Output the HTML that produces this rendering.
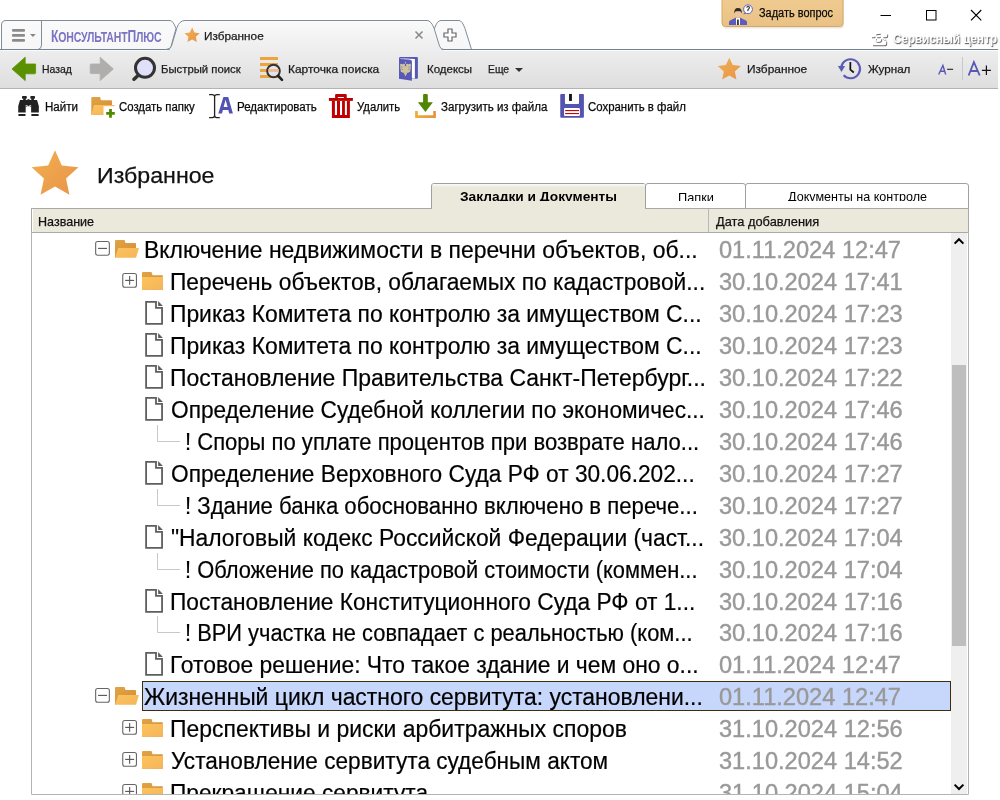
<!DOCTYPE html>
<html><head><meta charset="utf-8">
<style>
*{box-sizing:border-box}
html,body{margin:0;padding:0;width:1000px;height:800px;overflow:hidden;background:#fff;font-family:"Liberation Sans",sans-serif}
.a{position:absolute}
.t{position:absolute;white-space:nowrap;line-height:1}
.tb{position:absolute;white-space:nowrap;line-height:1;font-size:11.5px;color:#333}
.tb2{position:absolute;white-space:nowrap;line-height:1;font-size:11.5px;color:#111}
.rt{position:absolute;white-space:nowrap;font-size:23px;line-height:1;color:#000;-webkit-text-stroke:0.2px #000}
.dt{position:absolute;white-space:nowrap;font-size:23px;line-height:1;color:#999;-webkit-text-stroke:0.4px #999}

</style></head><body>

<svg class="a" style="left:0;top:0" width="1000" height="800" viewBox="0 0 1000 800">
<defs>
<linearGradient id="sg" x1="0" y1="0" x2="1" y2="1"><stop offset="0" stop-color="#f2b04e"/><stop offset="1" stop-color="#e8934a"/></linearGradient>
<linearGradient id="tbg" x1="0" y1="0" x2="0" y2="1"><stop offset="0" stop-color="#ededed"/><stop offset="1" stop-color="#dedede"/></linearGradient>
<linearGradient id="atab" gradientUnits="userSpaceOnUse" x1="0" y1="21" x2="0" y2="51"><stop offset="0" stop-color="#fafafa"/><stop offset="1" stop-color="#ededed"/></linearGradient>
<linearGradient id="itab" x1="0" y1="0" x2="0" y2="1"><stop offset="0" stop-color="#fafafa"/><stop offset="1" stop-color="#f7f7f7"/></linearGradient>
<linearGradient id="fback" x1="0" y1="0" x2="1" y2="1"><stop offset="0" stop-color="#dfa445"/><stop offset="1" stop-color="#d98a35"/></linearGradient>
<linearGradient id="ffront" x1="0" y1="0" x2="1" y2="1"><stop offset="0" stop-color="#fcc35c"/><stop offset="1" stop-color="#f5b55a"/></linearGradient>
<linearGradient id="tray" x1="0" y1="0" x2="1" y2="0"><stop offset="0" stop-color="#f0ac3a"/><stop offset="1" stop-color="#e8903e"/></linearGradient>
<linearGradient id="btn" x1="0" y1="0" x2="0" y2="1"><stop offset="0" stop-color="#f0cc90"/><stop offset="1" stop-color="#eac185"/></linearGradient>
</defs>
<rect x="722" y="-4" width="121" height="31" rx="4" fill="#cfcfcf" opacity="0.5" transform="translate(1,1.5)"/>
<rect x="722" y="-4" width="121" height="30.5" rx="3.5" fill="url(#btn)" stroke="#d9a860" stroke-width="1"/>
<g transform="translate(726,2)">
<path d="M3,22.9 L3,19.8 Q3.5,18.6 6,17.5 L9.6,15.8 L14.4,15.8 L18,17.5 Q20.6,18.6 21,19.8 L21,22.9 Z" fill="#5a5dbd"/>
<path d="M10,15.9 L14,15.9 L14,22.9 L10,22.9 Z" fill="#fff"/>
<path d="M11,17.6 L12.8,17.6 L12.9,22.9 L10.9,22.9 Z" fill="#3a3a3a"/>
<path d="M9.6,9 Q9.6,8.2 12,8.2 Q14.5,8.2 14.5,9 L14.5,13.5 Q14,15.6 12,15.8 Q10,15.6 9.6,13.5 Z" fill="#edc79c"/>
<path d="M8.3,11.6 Q7.7,6 12,6 Q16.3,6 15.8,11.6 Q15,9.3 14.2,9.2 L10,9.2 Q9,9.3 8.3,11.6 Z" fill="#2c2c2c"/>
<circle cx="22" cy="7.3" r="4.4" fill="#fff" stroke="#5d62c4" stroke-width="1"/>
<path d="M18.6,10.6 L17.2,12.4 L20.2,11.6 Z" fill="#5d62c4"/>
<path d="M20.7,5.7 Q21,4.4 22.2,4.5 Q23.7,4.7 23.3,6.1 Q22.9,7 22.1,7.4 L21.8,9.2" fill="none" stroke="#222" stroke-width="1.1"/>
</g>
<line x1="880.5" y1="15.5" x2="891" y2="15.5" stroke="#000" stroke-width="1"/>
<rect x="926.5" y="10.5" width="9.5" height="9.5" fill="none" stroke="#000" stroke-width="1"/>
<path d="M971,10 L981.3,20.3 M981.3,10 L971,20.3" stroke="#000" stroke-width="1.1"/>
<g transform="translate(868,29)"><path d="M4,8.5 H7.5 M9.2,8.5 H12.7 M14.2,8.5 H18.5 Q19.5,8.5 19.5,7.5 V5.5 M8.5,6.5 L9.3,5.3 H12.7 M8.3,10.3 V12 Q8.6,13.3 10.8,13.4 Q13.2,13.3 13.5,12 V10.3 M5,16.5 H17.5 Q18.5,16.5 18.5,15.5 V12.5 M15,9.5 L18,12" fill="none" stroke="#555" stroke-width="1.3" opacity="0.85" style="filter:blur(0.5px)"/><path d="M4,8.5 H7.5 M9.2,8.5 H12.7 M14.2,8.5 H18.5 Q19.5,8.5 19.5,7.5 V5.5 M8.5,6.5 L9.3,5.3 H12.7 M8.3,10.3 V12 Q8.6,13.3 10.8,13.4 Q13.2,13.3 13.5,12 V10.3 M5,16.5 H17.5 Q18.5,16.5 18.5,15.5 V12.5 M15,9.5 L18,12" transform="translate(-0.9,-1)" fill="none" stroke="#fff" stroke-width="1.3"/></g>
<path d="M1.5,49.5 L1.5,25 Q1.5,20.5 6,20.5 L170,20.5 Q173,20.5 176,28.5 L171,46.5 Q170,49.5 167,49.5 Z" fill="url(#itab)" stroke="#7f8d9b" stroke-width="1"/>
<path d="M41.5,21 L41.5,45 Q41.5,49 38,49.5" fill="none" stroke="#7f8d9b" stroke-width="1"/>
<path d="M427,49.5 L434.5,28.5 Q437,20.5 441,20.5 L459,20.5 Q462,20.5 465,28.5 L471.5,49.5" fill="url(#itab)" stroke="#7f8d9b" stroke-width="1"/>
<rect x="0" y="51" width="998" height="37" fill="url(#tbg)"/>
<rect x="0" y="50" width="998" height="1" fill="#fbfbfb"/>
<rect x="0" y="49" width="998" height="1" fill="#738394"/>
<rect x="0" y="88" width="998" height="1" fill="#b3b3b3"/>
<path d="M166,51 L169,50 Q171,48.5 172,45 L177,27.5 Q179.5,20.5 185,20.5 L427,20.5 Q431,20.5 434,28 L439.5,46 Q440.5,49.5 443,50 L444,51 Z" fill="url(#atab)"/>
<path d="M166,49.5 Q170.5,49.5 171.5,46 L177,27.5 Q179.5,20.5 185,20.5 L427,20.5 Q431,20.5 434,28 L439.5,46 Q440.5,49.5 444,49.5" fill="none" stroke="#7f8d9b" stroke-width="1"/>
<g fill="#8a8a8a"><rect x="12" y="29.1" width="13" height="2.7" rx="1"/><rect x="12" y="34.1" width="13" height="2.7" rx="1"/><rect x="12" y="39.1" width="13" height="2.7" rx="1"/></g>
<path d="M30,34.1 L35.8,34.1 L32.9,37 Z" fill="#858585"/>
<polygon points="192.15,27.60 194.44,32.44 199.76,33.13 195.86,36.81 196.85,42.07 192.15,39.50 187.45,42.07 188.44,36.81 184.54,33.13 189.86,32.44" fill="url(#sg)"/>
<path d="M415.5,31.5 L422.5,38.5 M422.5,31.5 L415.5,38.5" stroke="#888" stroke-width="1.5"/>
<path d="M448,29 H452 V33 H456 V37 H452 V41 H448 V37 H444 V33 H448 Z" fill="#fff" stroke="#666" stroke-width="1.2"/>
<path d="M12,69 L25.2,57.2 L25.2,64 L35.6,64 Q35.6,64 35.6,65 L35.6,72.8 Q35.6,73.8 34.6,73.8 L25.2,73.8 L25.2,80.6 Z" fill="#5a9100" stroke="#5a9100" stroke-width="0.8" stroke-linejoin="round"/>
<path d="M113.4,69 L100.2,57.2 L100.2,64 L91.2,64 Q90.2,64 90.2,65 L90.2,72.6 Q90.2,73.6 91.2,73.6 L100.2,73.6 L100.2,80.6 Z" fill="#b0aeac" stroke="#b0aeac" stroke-width="0.8" stroke-linejoin="round"/>
<circle cx="145" cy="67.8" r="9.5" fill="#e0e0fb" stroke="#333" stroke-width="3"/>
<line x1="134" y1="79.2" x2="138.3" y2="75.2" stroke="#333" stroke-width="3.6" stroke-linecap="round"/>
<g fill="#eea43c"><rect x="260" y="57" width="18" height="3"/><rect x="260" y="63" width="18" height="3"/><rect x="260" y="69" width="18" height="3"/><rect x="260" y="75" width="18" height="3"/></g>
<circle cx="273.5" cy="71" r="6.3" fill="#e6e0f6" fill-opacity="0.75" stroke="#333" stroke-width="2"/>
<rect x="268" y="69" width="11" height="3" fill="#eab070" opacity="0.6"/>
<line x1="278.3" y1="76" x2="282" y2="79.8" stroke="#222" stroke-width="2.6" stroke-linecap="round"/>
<g transform="translate(392,52)">
<path d="M7.1,6 Q7.1,5 8.1,5 L24.9,5 Q25.9,5 25.9,6 L25.9,25.8 Q25.9,26.8 24.9,26.8 L7.1,26.8 Z" fill="#5656b4"/>
<path d="M8,6.2 L22.9,7 L22.9,26.6 L19.9,26.6 Z" fill="#fff"/>
<path d="M7.1,6.3 L18.9,7.9 Q19.9,8.1 19.9,9 L19.9,28.7 L7.1,26.8 Z" fill="#5858b6"/>
<path d="M8.2,6.5 L18.5,7.9" stroke="#9c9cd8" stroke-width="0.8"/>
<g fill="#cfc59c">
<path d="M13.1,9.8 L13.9,9.8 L14.1,11.6 L12.9,11.6 Z"/>
<ellipse cx="11.9" cy="12.9" rx="1.1" ry="1.2"/><ellipse cx="15.1" cy="12.9" rx="1.1" ry="1.2"/>
<path d="M12.6,14.2 Q10,11.3 8.2,12 Q8,16.5 8.8,19.3 Q10.2,20.8 11.8,21 Z"/>
<path d="M14.4,14.2 Q17,11.3 18.8,12 Q19,16.5 18.2,19.3 Q16.8,20.8 15.2,21 Z"/>
<ellipse cx="13.5" cy="17.6" rx="2.3" ry="3.6"/>
<path d="M11.6,20.5 L13.5,24.4 L15.4,20.5 Z"/>
</g>
<g fill="#5858b6" opacity="0.55">
<path d="M9.3,14 L11.3,15.8 L9.5,15.5Z M9.4,16.5 L11.5,17.8 L9.7,18Z M17.7,14 L15.7,15.8 L17.5,15.5Z M17.6,16.5 L15.5,17.8 L17.3,18Z"/>
</g>
</g>
<path d="M515,68 L523,68 L519,72 Z" fill="#333"/>
<polygon points="729.30,57.70 732.71,65.11 740.81,66.06 734.82,71.59 736.41,79.59 729.30,75.60 722.19,79.59 723.78,71.59 717.79,66.06 725.89,65.11" fill="url(#sg)"/>
<path d="M843.6,75.3 A9.5,9.5 0 1 0 841.3,66.4" fill="none" stroke="#5b5cb8" stroke-width="2.1"/>
<path d="M837.9,66 L845.1,66 L841.5,71.9 Z" fill="#5b5cb8"/>
<path d="M850.4,62 L850.3,69.6 L853.8,72.5" fill="none" stroke="#111" stroke-width="1.7" stroke-linejoin="round"/>
<line x1="962.5" y1="57" x2="962.5" y2="80" stroke="#c8c8c8" stroke-width="1"/>
<g fill="#222" transform="translate(14,92)">
<rect x="8" y="4" width="4.8" height="2.7" rx="0.8"/><rect x="9.2" y="6.2" width="2.6" height="2.3"/>
<rect x="16.3" y="4" width="4.7" height="2.7" rx="0.8"/><rect x="17.3" y="6.2" width="2.6" height="2.3"/>
<path d="M6,8 L23,8 L24.9,14.3 L4.2,14.3 Z"/>
<path d="M4.3,14 L11.7,14 L11.7,20.6 L4.2,20.6 Z"/>
<path d="M17.15,14 L24.8,14 L24.85,20.6 L17.15,20.6 Z"/>
<path d="M11.7,14.3 L17.15,14.3 L17.15,13.3 L15.6,13.3 L14.45,15 L13.3,13.3 L11.7,13.3 Z" fill="#fff"/><path d="M12.8,8.1 L14.45,6.9 L16.1,8.1 Z"/><path d="M11.7,14.2 L12.3,14.9 L13,14.2 Z M15.9,14.2 L16.6,14.9 L17.2,14.2 Z"/>
<rect x="4.2" y="22" width="7.5" height="1.9" rx="0.9"/><rect x="17.15" y="22" width="7.7" height="1.9" rx="0.9"/>
</g>
<g transform="translate(86,92)">
<path d="M5.3,6 Q5.3,5 6.3,5 L14,5 L15,8.2 L25,8.2 Q26,8.2 26,9.2 L26,22.8 L5.3,22.8 Z" fill="url(#fback)"/>
<path d="M8,13 L28.7,13 L26.5,22.8 L5.3,22.8 Z" fill="url(#ffront)"/>
<rect x="17.5" y="14.2" width="12" height="12" fill="#fff"/>
<path d="M23.1,17 H25.9 V19.9 H28.8 V22.8 H25.9 V25.8 H23.1 V22.8 H20.2 V19.9 H23.1 Z" fill="#4f8a00"/>
</g>
<path d="M209.1,94.6 L212.5,94.6 Q214.6,94.8 214.6,96.5 L214.6,115.5 Q214.6,117.4 212.5,117.6 L209.1,117.6 M219.8,94.6 L216.7,94.6 Q214.6,94.8 214.6,96.5 M214.6,115.5 Q214.6,117.4 216.7,117.6 L219.8,117.6" fill="none" stroke="#222" stroke-width="1.3"/>
<path d="M218.3,113.6 L223.4,97.1 L228.2,97.1 L232.9,113.6 L229.2,113.6 L228.3,110 L222.9,110 L222,113.6 Z M223.6,107 L227.6,107 L225.6,99.7 Z" fill="#5353b3" fill-rule="evenodd"/>
<g fill="#c00000" transform="translate(325,90)">
<path d="M10.1,8.1 L10.1,5 Q10.1,3.9 11.2,3.9 L20.6,3.9 Q21.75,3.9 21.75,5 L21.75,8.1 L18.9,8.1 L18.9,6.9 L12.9,6.9 L12.9,8.1 Z"/>
<rect x="3.9" y="8" width="24" height="2.9"/>
<path d="M6.9,10.9 L24.9,10.9 L24.9,27.9 L6.9,27.9 Z M9.9,10.9 L9.9,24.9 L12,24.9 L12,10.9 Z M15,10.9 L15,24.9 L17.06,24.9 L17.06,10.9 Z M19.9,10.9 L19.9,24.9 L21.9,24.9 L21.9,10.9 Z" fill-rule="evenodd"/>
</g>
<g transform="translate(410,90)">
<path d="M13.1,5 Q13.1,3.9 14.2,3.9 L16.7,3.9 Q17.8,3.9 17.8,5 L17.8,12.2 L22.9,12.2 L15.4,21.9 L7.9,12.2 L13.1,12.2 Z" fill="#4f8500"/>
<path d="M5.1,21 L7.8,21 L7.8,25.2 L23.2,25.2 L23.2,21 L25.9,21 L25.9,27.9 L5.1,27.9 Z" fill="url(#tray)"/>
</g>
<g transform="translate(555,90)">
<path d="M6.25,3.94 L28,3.94 Q28.9,3.94 28.9,4.9 L28.9,26.8 Q28.9,27.75 28,27.75 L6.2,27.75 Q5.25,27.75 5.25,26.8 L5.25,4.9 Q5.25,3.94 6.25,3.94 Z" fill="#5353b1"/>
<path d="M9.94,3.94 L24,3.94 L24,13 Q24,13.9 23.1,13.9 L10.9,13.9 Q9.94,13.9 9.94,13 Z" fill="#fff"/>
<rect x="14.06" y="3.94" width="2.84" height="7" fill="#111"/>
<rect x="9" y="18" width="15.9" height="7.9" rx="1" fill="#fff"/>
<rect x="10.1" y="20" width="13.9" height="1.1" fill="#c00"/>
<rect x="10.1" y="23" width="13.9" height="1.1" fill="#c00"/>
</g>
<polygon points="55.00,150.20 61.82,165.42 78.40,167.20 66.03,178.38 69.46,194.70 55.00,186.40 40.54,194.70 43.97,178.38 31.60,167.20 48.18,165.42" fill="url(#sg)"/>
<path d="M645.5,208 L645.5,186 Q645.5,183.5 648,183.5 L743,183.5 Q745.5,183.5 745.5,186 L745.5,208" fill="#fff" stroke="#a0a0a0" stroke-width="1"/>
<path d="M745.5,208 L745.5,186 Q745.5,183.5 748,183.5 L966,183.5 Q968.5,183.5 968.5,186 L968.5,208" fill="#fff" stroke="#a0a0a0" stroke-width="1"/>
<path d="M0,208.5 L431.5,208.5 L431.5,186 Q431.5,183.5 434,183.5 L643,183.5 Q645.5,183.5 645.5,186 L645.5,208.5" fill="#ebe8dc" stroke="#a0a0a0" stroke-width="1"/>
<rect x="0" y="208" width="1000" height="1" fill="#fff"/>
<rect x="31.5" y="208.5" width="937" height="24" fill="#ebe8dc" stroke="#a9a9a9" stroke-width="1"/>
<rect x="432" y="208" width="213" height="1.5" fill="#ebe8dc"/>
<rect x="32" y="209" width="1" height="23" fill="#fff"/>
<defs><linearGradient id="thl" x1="0" y1="0" x2="0" y2="1"><stop offset="0" stop-color="#fff" stop-opacity="0.85"/><stop offset="1" stop-color="#fff" stop-opacity="0"/></linearGradient></defs><rect x="432.5" y="184" width="212.5" height="3.5" fill="url(#thl)"/>
<line x1="708.5" y1="209" x2="708.5" y2="232" stroke="#b8b8b8" stroke-width="1"/>
<path d="M31.5,232.5 L31.5,794.5 L968.5,794.5 L968.5,232.5" fill="none" stroke="#b4b4b4" stroke-width="1"/>
<rect x="951" y="233" width="16" height="561" fill="#efefef"/>
<rect x="952" y="365" width="14" height="281" fill="#bebebe"/>
<path d="M954.6,243.6 L959,239.2 L963.4,243.6" fill="none" stroke="#000" stroke-width="2"/>
<path d="M954.6,784.6 L959,789 L963.4,784.6" fill="none" stroke="#000" stroke-width="2"/>
</svg>
<div class="t" style="left:50.80px;top:27.80px;font-size:16.2px;color:#7a74c2;font-weight:bold;letter-spacing:-0.2px;transform-origin:0 0;transform:scaleX(0.7520)">К<span style="font-size:14px">ОНСУЛЬТАНТ</span>П<span style="font-size:14px">ЛЮС</span></div>
<div class="t" style="left:204.29px;top:30.90px;font-size:11px;color:#1c1c1c;transform-origin:0 0;transform:scaleX(1.0705);-webkit-text-stroke:0.25px #1c1c1c;">Избранное</div>
<div class="t" style="left:758.98px;top:7.40px;font-size:12px;color:#0a0a0a;transform-origin:0 0;transform:scaleX(0.9123);-webkit-text-stroke:0.25px #0a0a0a;">Задать вопрос</div>
<div class="t" style="left:42.17px;top:63.60px;font-size:11px;color:#1c1c1c;transform-origin:0 0;transform:scaleX(0.9480);-webkit-text-stroke:0.25px #1c1c1c;">Назад</div>
<div class="t" style="left:160.99px;top:63.60px;font-size:11px;color:#1c1c1c;transform-origin:0 0;transform:scaleX(1.0288);-webkit-text-stroke:0.25px #1c1c1c;">Быстрый поиск</div>
<div class="t" style="left:287.97px;top:63.60px;font-size:11px;color:#1c1c1c;transform-origin:0 0;transform:scaleX(1.0859);-webkit-text-stroke:0.25px #1c1c1c;">Карточка поиска</div>
<div class="t" style="left:426.62px;top:63.60px;font-size:11px;color:#1c1c1c;transform-origin:0 0;transform:scaleX(1.0443);-webkit-text-stroke:0.25px #1c1c1c;">Кодексы</div>
<div class="t" style="left:488.30px;top:63.60px;font-size:11px;color:#1c1c1c;transform-origin:0 0;transform:scaleX(0.9441);-webkit-text-stroke:0.25px #1c1c1c;">Еще</div>
<div class="t" style="left:746.54px;top:63.60px;font-size:11px;color:#1c1c1c;transform-origin:0 0;transform:scaleX(1.0802);-webkit-text-stroke:0.25px #1c1c1c;">Избранное</div>
<div class="t" style="left:867.80px;top:63.60px;font-size:11px;color:#1c1c1c;transform-origin:0 0;transform:scaleX(1.0552);-webkit-text-stroke:0.25px #1c1c1c;">Журнал</div>
<div class="t" style="left:45.12px;top:100.70px;font-size:12px;color:#0a0a0a;transform-origin:0 0;transform:scaleX(0.9640);-webkit-text-stroke:0.25px #0a0a0a;">Найти</div>
<div class="t" style="left:119.33px;top:100.70px;font-size:12px;color:#0a0a0a;transform-origin:0 0;transform:scaleX(0.9471);-webkit-text-stroke:0.25px #0a0a0a;">Создать папку</div>
<div class="t" style="left:237.15px;top:100.70px;font-size:12px;color:#0a0a0a;transform-origin:0 0;transform:scaleX(0.9627);-webkit-text-stroke:0.25px #0a0a0a;">Редактировать</div>
<div class="t" style="left:356.81px;top:100.70px;font-size:12px;color:#0a0a0a;transform-origin:0 0;transform:scaleX(0.9417);-webkit-text-stroke:0.25px #0a0a0a;">Удалить</div>
<div class="t" style="left:440.83px;top:100.70px;font-size:12px;color:#0a0a0a;transform-origin:0 0;transform:scaleX(0.9615);-webkit-text-stroke:0.25px #0a0a0a;">Загрузить из файла</div>
<div class="t" style="left:588.23px;top:100.70px;font-size:12px;color:#0a0a0a;transform-origin:0 0;transform:scaleX(0.9503);-webkit-text-stroke:0.25px #0a0a0a;">Сохранить в файл</div>
<div class="t" style="left:96.73px;top:164.80px;font-size:22.5px;color:#111;transform-origin:0 0;transform:scaleX(1.0306);-webkit-text-stroke:0.25px #111;">Избранное</div>
<div class="t" style="left:38.44px;top:214.80px;font-size:13px;color:#111;transform-origin:0 0;transform:scaleX(0.9651);-webkit-text-stroke:0.25px #111;">Название</div>
<div class="t" style="left:716.19px;top:214.80px;font-size:13px;color:#111;transform-origin:0 0;transform:scaleX(0.9868);-webkit-text-stroke:0.25px #111;">Дата добавления</div>
<div class="t" style="left:892.8px;top:33.2px;font-size:12.5px;font-weight:bold;color:#fff;text-shadow:0.8px 1.2px 1.2px rgba(0,0,0,0.75);transform-origin:0 0;transform:scaleX(0.935)">Сервисный центр</div>
<svg class="a" style="left:0;top:0" width="1000" height="800"><path d="M938.7,74.5 L942.9,65.4 L945.7,74.5 M940.4,71.2 L944.9,71.2" fill="none" stroke="#5858b4" stroke-width="1.4"/><path d="M947.1,69.3 H953.1" stroke="#222" stroke-width="1.1"/><path d="M968.6,75.5 L973.9,62.2 L979.7,75.5 M970.7,71 L977.8,71" fill="none" stroke="#5858b4" stroke-width="1.8"/><path d="M981.9,70.3 H990.9 M986.4,65.6 V75.1" stroke="#111" stroke-width="1.2"/></svg>
<div class="a" style="left:432px;top:184px;width:213px;height:16.5px;overflow:hidden"><div class="t" style="left:28.2px;top:6.1px;font-size:13px;font-weight:bold;color:#000;transform-origin:0 0;transform:scaleX(1.057)">Закладки и Документы</div></div>
<div class="a" style="left:646px;top:184px;width:99px;height:16.5px;overflow:hidden"><div class="t" style="left:32.0px;top:6.5px;font-size:13px;color:#000;transform-origin:0 0;transform:scaleX(0.985)">Папки</div></div>
<div class="a" style="left:746px;top:184px;width:222px;height:16.5px;overflow:hidden"><div class="t" style="left:42.4px;top:6.3px;font-size:13px;color:#000;transform-origin:0 0;transform:scaleX(0.967)">Документы на контроле</div></div>
<div class="a" style="left:32px;top:233px;width:919px;height:561px;overflow:hidden">
<svg class="a" style="left:-32px;top:-233px" width="1000" height="800" viewBox="0 0 1000 800">
<rect x="95.65" y="241.55" width="13.7" height="13.7" rx="2" fill="#fff" stroke="#666" stroke-width="1.1"/>
<line x1="98.05000000000001" y1="248.4" x2="107.05000000000001" y2="248.4" stroke="#555" stroke-width="1.1"/>
<path d="M115,241 Q115,240 116,240 L124.5,240 L125.5,243 L135,243 Q136,243 136,244 L136,248 L115,257.75 Z" fill="url(#fback)"/>
<path d="M118.25,248 L139,248 L136,257.75 L115,257.75 Z" fill="url(#ffront)"/>
<rect x="122.75" y="273.55" width="13.7" height="13.7" rx="2" fill="#fff" stroke="#666" stroke-width="1.1"/>
<line x1="125.15" y1="280.4" x2="134.15" y2="280.4" stroke="#555" stroke-width="1.1"/>
<line x1="129.65" y1="276" x2="129.65" y2="284.8" stroke="#555" stroke-width="1.1"/>
<path d="M142,273 Q142,272 143,272 L151.5,272 L152.5,275.25 L162.75,275.25 L162.75,289.75 L142,289.75 Z" fill="url(#fback)"/>
<rect x="142" y="277" width="20.75" height="12.75" fill="url(#ffront)"/>
<path d="M146.1,301.9 H156 V307.8 H162.05 V323.9 H146.1 Z" fill="#fff" stroke="#5e5e5e" stroke-width="1.8"/>
<path d="M158.1,301.1 L162.9,305.9 H158.1 Z" fill="#5e5e5e"/>
<path d="M146.1,333.9 H156 V339.8 H162.05 V355.9 H146.1 Z" fill="#fff" stroke="#5e5e5e" stroke-width="1.8"/>
<path d="M158.1,333.1 L162.9,337.9 H158.1 Z" fill="#5e5e5e"/>
<path d="M146.1,365.9 H156 V371.8 H162.05 V387.9 H146.1 Z" fill="#fff" stroke="#5e5e5e" stroke-width="1.8"/>
<path d="M158.1,365.1 L162.9,369.9 H158.1 Z" fill="#5e5e5e"/>
<path d="M146.1,397.9 H156 V403.8 H162.05 V419.9 H146.1 Z" fill="#fff" stroke="#5e5e5e" stroke-width="1.8"/>
<path d="M158.1,397.1 L162.9,401.9 H158.1 Z" fill="#5e5e5e"/>
<path d="M157.5,425 V441.5 H180" fill="none" stroke="#c8c8c8" stroke-width="1"/>
<path d="M146.1,461.9 H156 V467.8 H162.05 V483.9 H146.1 Z" fill="#fff" stroke="#5e5e5e" stroke-width="1.8"/>
<path d="M158.1,461.1 L162.9,465.9 H158.1 Z" fill="#5e5e5e"/>
<path d="M157.5,489 V505.5 H180" fill="none" stroke="#c8c8c8" stroke-width="1"/>
<path d="M146.1,525.9 H156 V531.8 H162.05 V547.9 H146.1 Z" fill="#fff" stroke="#5e5e5e" stroke-width="1.8"/>
<path d="M158.1,525.1 L162.9,529.9 H158.1 Z" fill="#5e5e5e"/>
<path d="M157.5,553 V569.5 H180" fill="none" stroke="#c8c8c8" stroke-width="1"/>
<path d="M146.1,589.9 H156 V595.8 H162.05 V611.9 H146.1 Z" fill="#fff" stroke="#5e5e5e" stroke-width="1.8"/>
<path d="M158.1,589.1 L162.9,593.9 H158.1 Z" fill="#5e5e5e"/>
<path d="M157.5,616 V632.5 H180" fill="none" stroke="#c8c8c8" stroke-width="1"/>
<path d="M146.1,652.9 H156 V658.8 H162.05 V674.9 H146.1 Z" fill="#fff" stroke="#5e5e5e" stroke-width="1.8"/>
<path d="M158.1,652.1 L162.9,656.9 H158.1 Z" fill="#5e5e5e"/>
<rect x="142.5" y="681.5" width="808" height="29" fill="#c7d6fb" stroke="#7a5a18" stroke-width="1"/>
<rect x="142.5" y="681.5" width="808" height="29" fill="none" stroke="#000" stroke-width="1" stroke-dasharray="1,1"/>
<rect x="95.65" y="688.55" width="13.7" height="13.7" rx="2" fill="#fff" stroke="#666" stroke-width="1.1"/>
<line x1="98.05000000000001" y1="695.4" x2="107.05000000000001" y2="695.4" stroke="#555" stroke-width="1.1"/>
<path d="M115,688 Q115,687 116,687 L124.5,687 L125.5,690 L135,690 Q136,690 136,691 L136,695 L115,704.75 Z" fill="url(#fback)"/>
<path d="M118.25,695 L139,695 L136,704.75 L115,704.75 Z" fill="url(#ffront)"/>
<rect x="122.75" y="720.55" width="13.7" height="13.7" rx="2" fill="#fff" stroke="#666" stroke-width="1.1"/>
<line x1="125.15" y1="727.4" x2="134.15" y2="727.4" stroke="#555" stroke-width="1.1"/>
<line x1="129.65" y1="723" x2="129.65" y2="731.8" stroke="#555" stroke-width="1.1"/>
<path d="M142,720 Q142,719 143,719 L151.5,719 L152.5,722.25 L162.75,722.25 L162.75,736.75 L142,736.75 Z" fill="url(#fback)"/>
<rect x="142" y="724" width="20.75" height="12.75" fill="url(#ffront)"/>
<rect x="122.75" y="752.55" width="13.7" height="13.7" rx="2" fill="#fff" stroke="#666" stroke-width="1.1"/>
<line x1="125.15" y1="759.4" x2="134.15" y2="759.4" stroke="#555" stroke-width="1.1"/>
<line x1="129.65" y1="755" x2="129.65" y2="763.8" stroke="#555" stroke-width="1.1"/>
<path d="M142,752 Q142,751 143,751 L151.5,751 L152.5,754.25 L162.75,754.25 L162.75,768.75 L142,768.75 Z" fill="url(#fback)"/>
<rect x="142" y="756" width="20.75" height="12.75" fill="url(#ffront)"/>
<rect x="122.75" y="784.55" width="13.7" height="13.7" rx="2" fill="#fff" stroke="#666" stroke-width="1.1"/>
<line x1="125.15" y1="791.4" x2="134.15" y2="791.4" stroke="#555" stroke-width="1.1"/>
<line x1="129.65" y1="787" x2="129.65" y2="795.8" stroke="#555" stroke-width="1.1"/>
<path d="M142,784 Q142,783 143,783 L151.5,783 L152.5,786.25 L162.75,786.25 L162.75,800.75 L142,800.75 Z" fill="url(#fback)"/>
<rect x="142" y="788" width="20.75" height="12.75" fill="url(#ffront)"/>
</svg>
<div class="rt" style="left:111.80px;top:6px;transform-origin:0 0;transform:scaleX(0.9969)">Включение недвижимости в перечни объектов, об...</div>
<div class="dt" style="left:687px;top:6px;transform-origin:0 0;transform:scaleX(1.026)">01.11.2024 12:47</div>
<div class="rt" style="left:137.52px;top:38px;transform-origin:0 0;transform:scaleX(0.989)">Перечень объектов, облагаемых по кадастровой...</div>
<div class="dt" style="left:687px;top:38px;transform-origin:0 0;transform:scaleX(1.026)">30.10.2024 17:41</div>
<div class="rt" style="left:137.51px;top:70px;transform-origin:0 0;transform:scaleX(0.9931)">Приказ Комитета по контролю за имуществом С...</div>
<div class="dt" style="left:687px;top:70px;transform-origin:0 0;transform:scaleX(1.026)">30.10.2024 17:23</div>
<div class="rt" style="left:137.51px;top:102px;transform-origin:0 0;transform:scaleX(0.9931)">Приказ Комитета по контролю за имуществом С...</div>
<div class="dt" style="left:687px;top:102px;transform-origin:0 0;transform:scaleX(1.026)">30.10.2024 17:23</div>
<div class="rt" style="left:137.51px;top:134px;transform-origin:0 0;transform:scaleX(0.9983)">Постановление Правительства Санкт-Петербург...</div>
<div class="dt" style="left:687px;top:134px;transform-origin:0 0;transform:scaleX(1.026)">30.10.2024 17:22</div>
<div class="rt" style="left:138.52px;top:166px;transform-origin:0 0;transform:scaleX(0.9853)">Определение Судебной коллегии по экономичес...</div>
<div class="dt" style="left:687px;top:166px;transform-origin:0 0;transform:scaleX(1.026)">30.10.2024 17:46</div>
<div class="rt" style="left:153.09px;top:198px;transform-origin:0 0;transform:scaleX(0.9581)">! Споры по уплате процентов при возврате нало...</div>
<div class="dt" style="left:687px;top:198px;transform-origin:0 0;transform:scaleX(1.026)">30.10.2024 17:46</div>
<div class="rt" style="left:138.51px;top:230px;transform-origin:0 0;transform:scaleX(0.9865)">Определение Верховного Суда РФ от 30.06.202...</div>
<div class="dt" style="left:687px;top:230px;transform-origin:0 0;transform:scaleX(1.026)">30.10.2024 17:27</div>
<div class="rt" style="left:153.07px;top:262px;transform-origin:0 0;transform:scaleX(0.9629)">! Здание банка обоснованно включено в перече...</div>
<div class="dt" style="left:687px;top:262px;transform-origin:0 0;transform:scaleX(1.026)">30.10.2024 17:27</div>
<div class="rt" style="left:138.51px;top:294px;transform-origin:0 0;transform:scaleX(0.992)">"Налоговый кодекс Российской Федерации (част...</div>
<div class="dt" style="left:687px;top:294px;transform-origin:0 0;transform:scaleX(1.026)">30.10.2024 17:04</div>
<div class="rt" style="left:153.10px;top:326px;transform-origin:0 0;transform:scaleX(0.9506)">! Обложение по кадастровой стоимости (коммен...</div>
<div class="dt" style="left:687px;top:326px;transform-origin:0 0;transform:scaleX(1.026)">30.10.2024 17:04</div>
<div class="rt" style="left:137.53px;top:358px;transform-origin:0 0;transform:scaleX(0.9869)">Постановление Конституционного Суда РФ от 1...</div>
<div class="dt" style="left:687px;top:358px;transform-origin:0 0;transform:scaleX(1.026)">30.10.2024 17:16</div>
<div class="rt" style="left:153.10px;top:389px;transform-origin:0 0;transform:scaleX(0.9503)">! ВРИ участка не совпадает с реальностью (ком...</div>
<div class="dt" style="left:687px;top:389px;transform-origin:0 0;transform:scaleX(1.026)">30.10.2024 17:16</div>
<div class="rt" style="left:137.51px;top:421px;transform-origin:0 0;transform:scaleX(0.9934)">Готовое решение: Что такое здание и чем оно о...</div>
<div class="dt" style="left:687px;top:421px;transform-origin:0 0;transform:scaleX(1.026)">01.11.2024 12:47</div>
<div class="rt" style="left:112.20px;top:453px;transform-origin:0 0;transform:scaleX(0.996)">Жизненный цикл частного сервитута: установлени...</div>
<div class="dt" style="left:687px;top:453px;transform-origin:0 0;transform:scaleX(1.026)">01.11.2024 12:47</div>
<div class="rt" style="left:137.51px;top:485px;transform-origin:0 0;transform:scaleX(0.9971)">Перспективы и риски арбитражных споров</div>
<div class="dt" style="left:687px;top:485px;transform-origin:0 0;transform:scaleX(1.026)">31.10.2024 12:56</div>
<div class="rt" style="left:138.52px;top:517px;transform-origin:0 0;transform:scaleX(0.9836)">Установление сервитута судебным актом</div>
<div class="dt" style="left:687px;top:517px;transform-origin:0 0;transform:scaleX(1.026)">31.10.2024 14:52</div>
<div class="rt" style="left:137.55px;top:549px;transform-origin:0 0;transform:scaleX(0.987)">Прекращение сервитута</div>
<div class="dt" style="left:687px;top:549px;transform-origin:0 0;transform:scaleX(1.026)">31.10.2024 15:04</div>
</div>
</body></html>
